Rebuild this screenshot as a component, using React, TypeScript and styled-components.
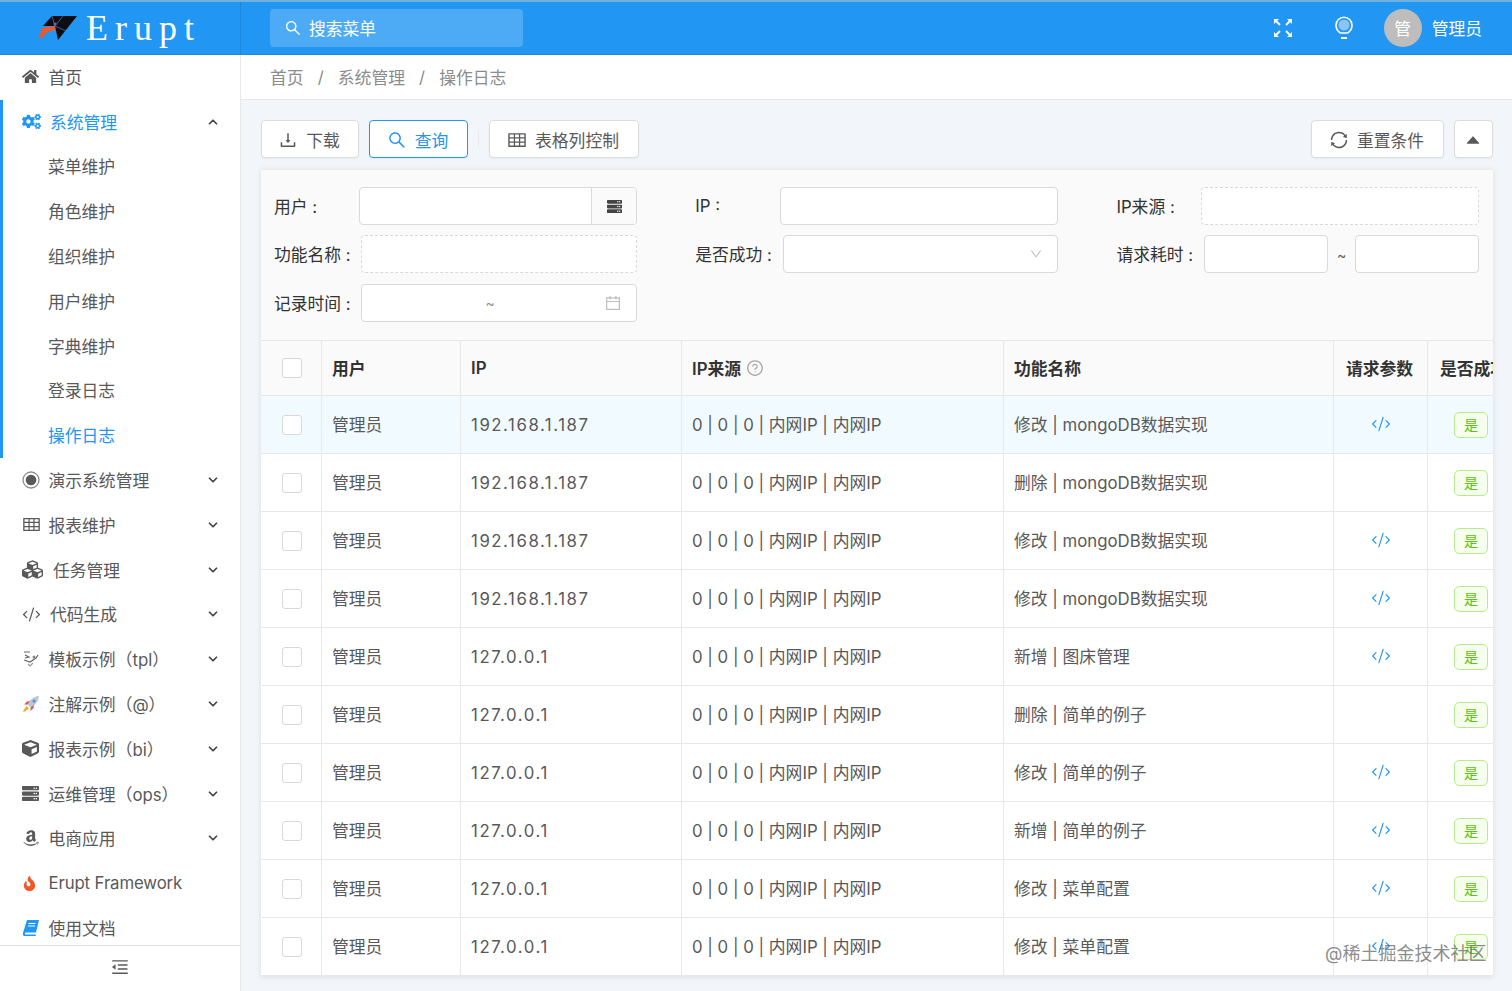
import React from 'react';
import styled, { createGlobalStyle } from 'styled-components';
import { FaHome, FaCogs, FaCubes, FaCube, FaServer, FaAmazon, FaFire } from 'react-icons/fa';
import {
  AiOutlineDownload, AiOutlineSearch, AiOutlineTable, AiOutlineSync, AiOutlineCalendar, AiOutlineDown,
  AiOutlineQuestionCircle, AiFillCaretUp, AiOutlineMenuFold,
} from 'react-icons/ai';
import { ChevronDown, ChevronUp, CodeXml } from 'lucide-react';

const FONT = `Inter, "Noto Sans CJK SC", "Noto Sans", sans-serif`;

const Global = createGlobalStyle`
  html, body { margin: 0; padding: 0; height: 100%; overflow: hidden; }
  body { font-family: ${FONT}; font-size: 16.8px; color: #595959; background: #f2f5f9; }
  * { box-sizing: border-box; }
`;

const Page = styled.div`
  position: relative;
  width: 1512px;
  height: 991px;
  display: flex;
  flex-direction: column;
  overflow: hidden;
`;

const Header = styled.header`
  flex: none;
  height: 55px;
  display: flex;
  align-items: center;
  background: #2196f3;
  border-top: 2px solid #72b0de;
  border-bottom: 1px solid #1e88dc;
  color: #fff;
`;

const Brand = styled.div`
  flex: none;
  width: 241px;
  height: 100%;
  display: flex;
  align-items: center;
  gap: 9px;
  padding-left: 39px;
  border-right: 1px solid #1e88dc;
`;

const BrandName = styled.span`
  font-family: "Liberation Serif", serif;
  font-size: 36px;
  letter-spacing: 7px;
  color: #fff;
`;

const SearchBox = styled.div`
  margin-left: 29px;
  width: 253px;
  height: 38px;
  border-radius: 4px;
  background: rgba(255, 255, 255, 0.2);
  display: flex;
  align-items: center;
  gap: 7px;
  padding-left: 14px;
  color: #fff;
  font-size: 16.8px;
`;

const HeaderRight = styled.div`
  margin-left: auto;
  padding-right: 30px;
  display: flex;
  align-items: center;
`;

const BulbWrap = styled.span`
  display: flex;
  margin: 0 30px 0 41px;
`;

const Avatar = styled.div`
  width: 38px;
  height: 38px;
  border-radius: 50%;
  background: #bdbdbd;
  color: #fff;
  display: flex;
  align-items: center;
  justify-content: center;
  font-size: 16.8px;
`;

const UserName = styled.span`
  margin-left: 10px;
  font-size: 16.8px;
  color: #fff;
`;

const Body = styled.div`
  flex: 1;
  min-height: 0;
  display: flex;
`;

const Sidebar = styled.aside`
  flex: none;
  width: 241px;
  background: #fff;
  border-right: 1px solid #e8e8e8;
  display: flex;
  flex-direction: column;
`;

const MenuList = styled.nav`
  flex: 1;
  min-height: 0;
  overflow: hidden;
`;

const OpenGroup = styled.div`
  border-left: 3px solid #2196f3;
`;

const MenuRow = styled.div<{ $active?: boolean; $sub?: boolean; $inGroup?: boolean }>`
  height: 44.8px;
  display: flex;
  align-items: center;
  padding-bottom: 1px;
  padding-left: ${(p) => (p.$inGroup ? (p.$sub ? 45 : 19) : 22)}px;
  color: ${(p) => (p.$active ? '#2196f3' : '#595959')};
  font-size: 16.8px;
  white-space: nowrap;
`;

const MenuIcon = styled.span<{ $w: number; $color?: string }>`
  flex: none;
  width: ${(p) => p.$w}px;
  display: flex;
  align-items: center;
  color: ${(p) => p.$color || '#595959'};
`;

const Caret = styled.span`
  margin-left: auto;
  margin-right: 20px;
  display: flex;
  color: #444;
`;

const LatinLabel = styled.span`
  letter-spacing: -0.12px;
`;

const SideFooter = styled.div`
  flex: none;
  height: 46px;
  padding-bottom: 4px;
  border-top: 1px solid #e2e2e2;
  background: #fff;
  display: flex;
  align-items: center;
  justify-content: center;
  color: #595959;
`;

const Main = styled.main`
  flex: 1;
  min-width: 0;
  display: flex;
  flex-direction: column;
`;

const Crumbs = styled.div`
  flex: none;
  height: 45px;
  background: #fff;
  border-bottom: 1px solid #e8e8e8;
  display: flex;
  align-items: center;
  padding-left: 29px;
  color: #8c8c8c;
  font-size: 16.8px;
`;

const CrumbSep = styled.span`
  margin: 0 14.1px;
`;

const Content = styled.div`
  flex: 1;
  min-height: 0;
  padding: 20px 19px 0 20px;
`;

const Toolbar = styled.div`
  height: 38px;
  display: flex;
  align-items: center;
  margin-bottom: 11px;
`;

const Btn = styled.div<{ $primary?: boolean; $w: number; $ml?: number }>`
  flex: none;
  width: ${(p) => p.$w}px;
  height: 38px;
  margin-left: ${(p) => p.$ml || 0}px;
  padding: 1px 2px 0 0;
  display: flex;
  align-items: center;
  justify-content: center;
  gap: 8px;
  border-radius: 4px;
  background: #fff;
  border: 1px solid ${(p) => (p.$primary ? '#2196f3' : '#dcdcdc')};
  color: ${(p) => (p.$primary ? '#2196f3' : '#595959')};
  box-shadow: 0 1px 2px rgba(0, 0, 0, 0.05);
  font-size: 16.8px;
`;

const ToolDivider = styled.span`
  width: 1px;
  height: 16px;
  background: #e8e8e8;
  margin-left: 10px;
`;

const ToolSpacer = styled.span`
  flex: 1;
`;

const Card = styled.section`
  width: 1232px;
  background: #fff;
  box-shadow: 0 1px 6px rgba(0, 0, 0, 0.1);
`;

const Filter = styled.div`
  height: 172px;
  background: #fafafa;
  border-top: 1px solid #ececec;
  border-bottom: 1px solid #e8e8e8;
  padding: 17px 13px 0;
  display: grid;
  grid-template-columns: repeat(3, 363px);
  grid-auto-rows: 38px;
  column-gap: 58.2px;
  row-gap: 10.3px;
`;

const Field = styled.div`
  display: flex;
  align-items: center;
  min-width: 0;
`;

const Label = styled.span<{ $wide?: boolean }>`
  flex: none;
  width: ${(p) => (p.$wide ? 87.4 : 85)}px;
  color: #333;
  font-size: 16.8px;
  white-space: pre;
`;

const InputBox = styled.div<{ $dashed?: boolean }>`
  flex: 1;
  height: 38px;
  min-width: 0;
  display: flex;
  align-items: center;
  background: #fff;
  border: 1px ${(p) => (p.$dashed ? 'dashed' : 'solid')} #d9d9d9;
  border-radius: 4px;
  overflow: hidden;
`;

const Addon = styled.span`
  margin-left: auto;
  width: 45px;
  height: 100%;
  background: #fafafa;
  border-left: 1px solid #d9d9d9;
  display: flex;
  align-items: center;
  justify-content: center;
  color: #444;
`;

const SelectArrow = styled.span`
  margin-left: auto;
  margin-right: 14px;
  display: flex;
  color: #bfbfbf;
`;

const DateSep = styled.span`
  margin-left: 123px;
  color: #8c8c8c;
  font-size: 14px;
`;

const RangeSep = styled.span`
  flex: none;
  width: 27px;
  text-align: center;
  color: #595959;
  font-size: 14px;
`;

const TableClip = styled.div`
  width: 100%;
  overflow: hidden;
`;

const Table = styled.table`
  table-layout: fixed;
  width: 1270px;
  border-collapse: separate;
  border-spacing: 0;
`;

const Th = styled.th<{ $center?: boolean; $pad?: number }>`
  height: 55px;
  padding: 0 0 1px ${(p) => p.$pad ?? 10}px;
  text-align: ${(p) => (p.$center ? 'center' : 'left')};
  background: #fafafa;
  color: #333;
  font-size: 16.8px;
  font-weight: 600;
  white-space: nowrap;
  overflow: hidden;
  border-right: 1px solid #e8e8e8;
  border-bottom: 1px solid #e8e8e8;
`;

const Td = styled.td<{ $center?: boolean; $pad?: number; $hover?: boolean }>`
  height: 58px;
  padding: 0 0 2px ${(p) => p.$pad ?? 10}px;
  text-align: ${(p) => (p.$center ? 'center' : 'left')};
  background: ${(p) => (p.$hover ? '#f1fbff' : '#fff')};
  color: #595959;
  font-size: 16.8px;
  white-space: nowrap;
  border-right: 1px solid #e8e8e8;
  border-bottom: 1px solid #e8e8e8;
`;

const Check = styled.span<{ $body?: boolean }>`
  display: inline-block;
  width: 20px;
  height: 20px;
  margin-top: ${(p) => (p.$body ? 6 : 4)}px;
  border: 1px solid #d9d9d9;
  border-radius: 3px;
  background: #fff;
`;

const HeadWithHelp = styled.span`
  display: inline-flex;
  align-items: center;
  gap: 5px;
`;

const HelpIcon = styled.span`
  display: flex;
  color: #a6a6a6;
`;

const IpText = styled.span`
  position: relative;
  top: 1px;
  letter-spacing: 1.55px;
`;

const CodeLink = styled.span`
  display: inline-flex;
  color: #2196f3;
  vertical-align: middle;
`;

const YesTag = styled.span`
  display: inline-block;
  width: 34px;
  height: 26px;
  margin-top: 2px;
  line-height: 24px;
  text-align: center;
  font-size: 14px;
  color: #52c41a;
  background: #f6ffed;
  border: 1px solid #b7eb8f;
  border-radius: 5px;
`;

const Watermark = styled.div`
  position: absolute;
  left: 1325px;
  top: 942px;
  font-size: 18px;
  line-height: 24px;
  color: rgba(110, 110, 110, 0.8);
  white-space: nowrap;
  pointer-events: none;
`;

const Logo = () => (
  <svg width="38" height="26" viewBox="0 0 38 26">
    <path d="M13 1 L38 1 L19 25 L16 11 L4 11 Z" fill="#0d0d12" />
    <path d="M0 23 L3 13 L16 11 L16 15 L8 17 L3 23 Z" fill="#f0582a" />
    <path d="M13 1 L16 11 M16 11 L27 16 M16 11 L24 1" stroke="#4a6fb5" strokeWidth="0.8" fill="none" />
    <circle cx="16" cy="9" r="1.5" fill="#4a6fd0" />
  </svg>
);

const FullscreenIcon = () => (
  <svg width="20" height="20" viewBox="0 0 20 20" fill="none" stroke="#fff" strokeWidth="1.8">
    <path d="M2.5 2.5 L7 7 M13 7 L17.5 2.5 M2.5 17.5 L7 13 M13 13 L17.5 17.5" />
    <path d="M1 6 V1 H6 Z M14 1 H19 V6 Z M1 14 V19 H6 Z M19 14 V19 H14 Z" fill="#fff" stroke="none" />
  </svg>
);

const Bulb = () => (
  <svg width="20" height="24" viewBox="0 0 20 24" fill="none" stroke="#fff" strokeWidth="1.6">
    <circle cx="10" cy="9" r="5.6" fill="#8cc4f8" stroke="none" />
    <path d="M6.5 17 C3.8 15.4 2 12.6 2 9.2 A8 8 0 0 1 18 9.2 C18 12.6 16.2 15.4 13.5 17 L6.5 17 Z" />
    <path d="M7 22 H13" strokeWidth="2" />
  </svg>
);

const DotCircle = () => (
  <svg width="18" height="18" viewBox="0 0 18 18">
    <circle cx="9" cy="9" r="8" fill="none" stroke="#8c8c8c" strokeWidth="1.3" />
    <circle cx="9" cy="9" r="5.3" fill="#595959" />
  </svg>
);

const BookIcon = () => (
  <svg width="18" height="18" viewBox="0 0 18 18">
    <path d="M5 1 H17 L14 13.5 H4 C2.8 13.5 2.4 15.5 3.6 15.5 H14 L13.6 17 H2.5 C1 17 0.6 15.5 1 14 Z" fill="#2196f3" />
    <path d="M6.5 4.5 H13.5 M6 7 H13" stroke="#fff" strokeWidth="1" />
  </svg>
);

const TplIcon = () => (
  <svg width="18" height="18" viewBox="0 0 18 18" fill="none" stroke="#666" strokeWidth="1.2">
    <path d="M2 2 H8 M3 5 L7 7 L3 8" />
    <path d="M2 10 L8 12 L14 8 L16 5" />
    <path d="M6 14 L8 16 L11 13" stroke="#999" />
    <circle cx="12" cy="7" r="1.5" fill="#888" stroke="none" />
  </svg>
);

const RocketIcon = () => (
  <svg width="18" height="18" viewBox="0 0 18 18">
    <path d="M17 1 C11.5 1.5 7.5 5 5.5 9.5 L8.5 12.5 C13 10.5 16.5 6.5 17 1 Z" fill="#b9c7d6" />
    <path d="M5.5 9.5 L2 9.5 L5 6.5 L8 6 Z M8.5 12.5 L8.5 16 L11.5 13 L12 10 Z" fill="#e2574c" />
    <path d="M4.5 11 L7 13.5 L2 17 Q1 16 1 16 Z" fill="#f5a623" />
    <circle cx="12" cy="6" r="1.5" fill="#4a90d9" />
  </svg>
);

type Item = { label: string; icon: React.ReactNode; w: number };

const menus: Item[] = [
  { label: '演示系统管理', icon: <DotCircle />, w: 26.5 },
  { label: '报表维护', icon: <AiOutlineTable size={19} />, w: 26.5 },
  { label: '任务管理', icon: <FaCubes size={21} />, w: 31 },
  { label: '代码生成', icon: <CodeXml size={19} strokeWidth={1.6} />, w: 28 },
  { label: '模板示例（tpl）', icon: <TplIcon />, w: 26.5 },
  { label: '注解示例（@）', icon: <RocketIcon />, w: 26.5 },
  { label: '报表示例（bi）', icon: <FaCube size={17} />, w: 26.5 },
  { label: '运维管理（ops）', icon: <FaServer size={17} />, w: 26.5 },
  { label: '电商应用', icon: <FaAmazon size={18} />, w: 26.5 },
];

const subs = ['菜单维护', '角色维护', '组织维护', '用户维护', '字典维护', '登录日志', '操作日志'];

const rows: [string, string, boolean][] = [
  ['192.168.1.187', '修改 | mongoDB数据实现', true],
  ['192.168.1.187', '删除 | mongoDB数据实现', false],
  ['192.168.1.187', '修改 | mongoDB数据实现', true],
  ['192.168.1.187', '修改 | mongoDB数据实现', true],
  ['127.0.0.1', '新增 | 图床管理', true],
  ['127.0.0.1', '删除 | 简单的例子', false],
  ['127.0.0.1', '修改 | 简单的例子', true],
  ['127.0.0.1', '新增 | 简单的例子', true],
  ['127.0.0.1', '修改 | 菜单配置', true],
  ['127.0.0.1', '修改 | 菜单配置', true],
];

export default function App() {
  return (
    <Page>
      <Global />
      <Header>
        <Brand>
          <Logo />
          <BrandName>Erupt</BrandName>
        </Brand>
        <SearchBox>
          <AiOutlineSearch size={18} />
          搜索菜单
        </SearchBox>
        <HeaderRight>
          <FullscreenIcon />
          <BulbWrap>
            <Bulb />
          </BulbWrap>
          <Avatar>管</Avatar>
          <UserName>管理员</UserName>
        </HeaderRight>
      </Header>
      <Body>
        <Sidebar>
          <MenuList>
            <MenuRow>
              <MenuIcon $w={26.5}><FaHome size={17} /></MenuIcon>
              首页
            </MenuRow>
            <OpenGroup>
              <MenuRow $active $inGroup>
                <MenuIcon $w={28} $color="#2196f3"><FaCogs size={19} /></MenuIcon>
                系统管理
                <Caret><ChevronUp size={14} strokeWidth={3} /></Caret>
              </MenuRow>
              {subs.map((s, i) => (
                <MenuRow key={s} $sub $inGroup $active={i === subs.length - 1}>{s}</MenuRow>
              ))}
            </OpenGroup>
            {menus.map((it) => (
              <MenuRow key={it.label}>
                <MenuIcon $w={it.w}>{it.icon}</MenuIcon>
                {it.label}
                <Caret><ChevronDown size={14} strokeWidth={3} /></Caret>
              </MenuRow>
            ))}
            <MenuRow>
              <MenuIcon $w={26.5} $color="#f0582a"><FaFire size={15} /></MenuIcon>
              <LatinLabel>Erupt Framework</LatinLabel>
            </MenuRow>
            <MenuRow>
              <MenuIcon $w={26.5}><BookIcon /></MenuIcon>
              使用文档
            </MenuRow>
          </MenuList>
          <SideFooter>
            <AiOutlineMenuFold size={20} />
          </SideFooter>
        </Sidebar>
        <Main>
          <Crumbs>
            首页<CrumbSep>/</CrumbSep>系统管理<CrumbSep>/</CrumbSep>操作日志
          </Crumbs>
          <Content>
            <Toolbar>
              <Btn $w={98}><AiOutlineDownload size={20} />下载</Btn>
              <Btn $w={99} $ml={10} $primary><AiOutlineSearch size={20} />查询</Btn>
              <ToolDivider />
              <Btn $w={150} $ml={10}><AiOutlineTable size={20} />表格列控制</Btn>
              <ToolSpacer />
              <Btn $w={133}><AiOutlineSync size={20} />重置条件</Btn>
              <Btn $w={39} $ml={10}><AiFillCaretUp size={18} /></Btn>
            </Toolbar>
            <Card>
              <Filter>
                <Field>
                  <Label>用户 :</Label>
                  <InputBox>
                    <Addon><FaServer size={15} /></Addon>
                  </InputBox>
                </Field>
                <Field>
                  <Label>IP :</Label>
                  <InputBox />
                </Field>
                <Field>
                  <Label>IP来源 :</Label>
                  <InputBox $dashed />
                </Field>
                <Field>
                  <Label $wide>功能名称 :</Label>
                  <InputBox $dashed />
                </Field>
                <Field>
                  <Label $wide>是否成功 :</Label>
                  <InputBox>
                    <SelectArrow><AiOutlineDown size={14} /></SelectArrow>
                  </InputBox>
                </Field>
                <Field>
                  <Label $wide>请求耗时 :</Label>
                  <InputBox />
                  <RangeSep>~</RangeSep>
                  <InputBox />
                </Field>
                <Field>
                  <Label $wide>记录时间 :</Label>
                  <InputBox>
                    <DateSep>~</DateSep>
                    <SelectArrow><AiOutlineCalendar size={18} /></SelectArrow>
                  </InputBox>
                </Field>
              </Filter>
              <TableClip>
                <Table>
                  <colgroup>
                    <col style={{ width: 61 }} />
                    <col style={{ width: 139 }} />
                    <col style={{ width: 221 }} />
                    <col style={{ width: 322 }} />
                    <col style={{ width: 330 }} />
                    <col style={{ width: 94 }} />
                    <col style={{ width: 103 }} />
                  </colgroup>
                  <thead>
                    <tr>
                      <Th $center $pad={2}><Check /></Th>
                      <Th>用户</Th>
                      <Th>IP</Th>
                      <Th>
                        <HeadWithHelp>
                          IP来源
                          <HelpIcon><AiOutlineQuestionCircle size={18} /></HelpIcon>
                        </HeadWithHelp>
                      </Th>
                      <Th>功能名称</Th>
                      <Th $pad={12}>请求参数</Th>
                      <Th $pad={12}>是否成功</Th>
                    </tr>
                  </thead>
                  <tbody>
                    {rows.map(([ip, fn, code], i) => (
                      <tr key={i}>
                        <Td $center $pad={2} $hover={i === 0}><Check $body /></Td>
                        <Td $hover={i === 0}>管理员</Td>
                        <Td $hover={i === 0}><IpText>{ip}</IpText></Td>
                        <Td $hover={i === 0}>0 | 0 | 0 | 内网IP | 内网IP</Td>
                        <Td $hover={i === 0}>{fn}</Td>
                        <Td $center $pad={0} $hover={i === 0}>
                          {code && <CodeLink><CodeXml size={20} strokeWidth={1.4} /></CodeLink>}
                        </Td>
                        <Td $pad={26} $hover={i === 0}><YesTag>是</YesTag></Td>
                      </tr>
                    ))}
                  </tbody>
                </Table>
              </TableClip>
            </Card>
          </Content>
        </Main>
      </Body>
      <Watermark>@稀土掘金技术社区</Watermark>
    </Page>
  );
}
